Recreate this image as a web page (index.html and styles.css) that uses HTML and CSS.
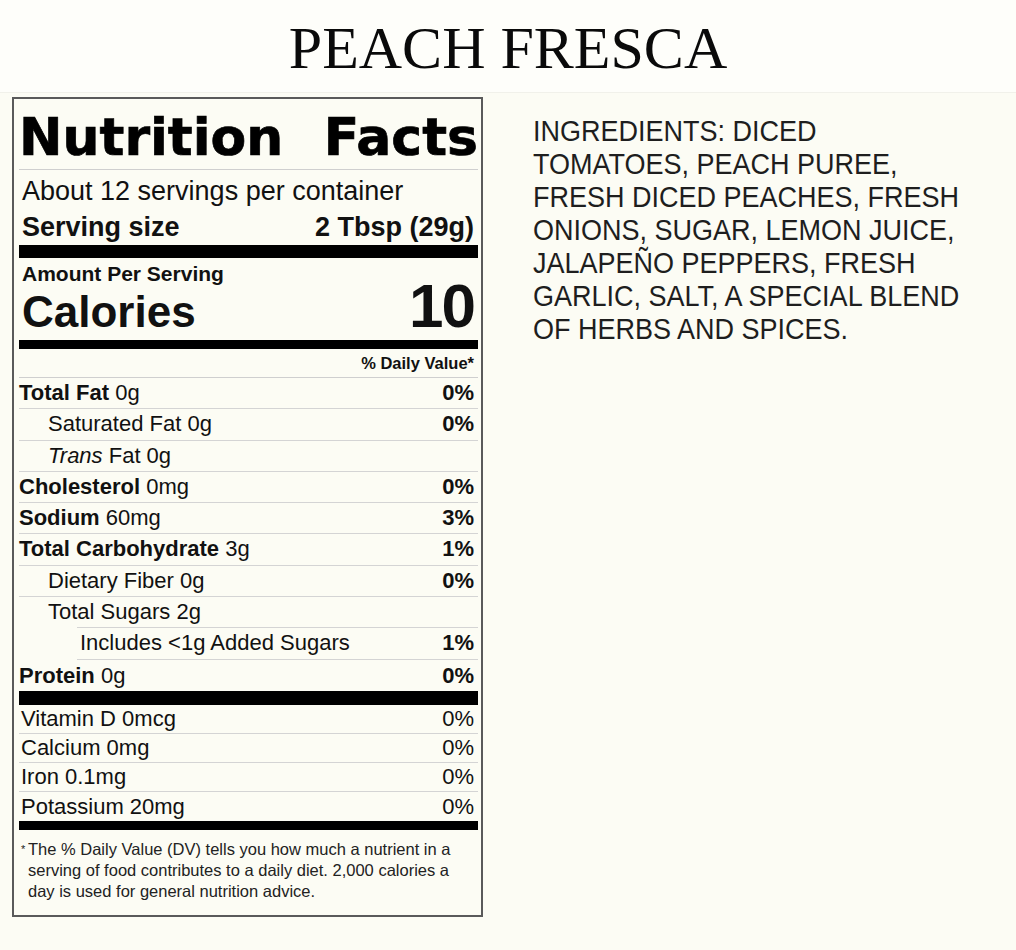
FILE: index.html
```html
<!DOCTYPE html>
<html lang="en">
<head>
<meta charset="utf-8">
<title>Peach Fresca</title>
<link rel="stylesheet" href="styles.css">
</head>
<body>
<header class="top">
  <h1 class="title">PEACH FRESCA</h1>
</header>
<main class="page">
  <section class="label">
    <div class="nf-head"><span>Nutrition</span><span>Facts</span></div>
    <div class="servings">About 12 servings per container</div>
    <div class="serving-size"><span>Serving size</span><span>2 Tbsp (29g)</span></div>
    <div class="cal-block">
      <div class="cal-left">
        <div class="amount">Amount Per Serving</div>
        <div class="cal-label">Calories</div>
      </div>
      <div class="cal-value">10</div>
    </div>
    <div class="dv-head">% Daily Value*</div>
    <div class="row"><span><b>Total Fat</b> 0g</span><b>0%</b></div>
    <div class="row sub"><span>Saturated Fat 0g</span><b>0%</b></div>
    <div class="row sub"><span><i>Trans</i> Fat 0g</span></div>
    <div class="row"><span><b>Cholesterol</b> 0mg</span><b>0%</b></div>
    <div class="row"><span><b>Sodium</b> 60mg</span><b>3%</b></div>
    <div class="row"><span><b>Total Carbohydrate</b> 3g</span><b>1%</b></div>
    <div class="row sub"><span>Dietary Fiber 0g</span><b>0%</b></div>
    <div class="row sub nob"><span>Total Sugars 2g</span></div>
    <div class="row sub2"><span>Includes &lt;1g Added Sugars</span><b>1%</b></div>
    <div class="row protein"><span><b>Protein</b> 0g</span><b>0%</b></div>
    <div class="vrow"><span>Vitamin D 0mcg</span><span>0%</span></div>
    <div class="vrow"><span>Calcium 0mg</span><span>0%</span></div>
    <div class="vrow"><span>Iron 0.1mg</span><span>0%</span></div>
    <div class="vrow vlast"><span>Potassium 20mg</span><span>0%</span></div>
    <p class="foot"><span class="ast">*</span>The % Daily Value (DV) tells you how much a nutrient in a<br>serving of food contributes to a daily diet. 2,000 calories a<br>day is used for general nutrition advice.</p>
  </section>
  <section class="ingredients">
    INGREDIENTS: DICED<br>
    TOMATOES, PEACH PUREE,<br>
    FRESH DICED PEACHES, FRESH<br>
    ONIONS, SUGAR, LEMON JUICE,<br>
    JALAPEÑO PEPPERS, FRESH<br>
    GARLIC, SALT, A SPECIAL BLEND<br>
    OF HERBS AND SPICES.
  </section>
</main>
</body>
</html>
```
FILE: styles.css
```css
html, body {
  margin: 0;
  padding: 0;
}
body {
  background: #fcfcf4;
  font-family: "Liberation Sans", Arial, sans-serif;
  color: #111;
}
.top {
  padding: 18px 0 14px;
  background: #fefefa;
  border-bottom: 1px solid #f1f1ea;
  text-align: center;
}
.title {
  margin: 0;
  font-family: "Liberation Serif", "Times New Roman", serif;
  font-weight: 400;
  font-size: 60px;
  line-height: 60px;
  color: #0a0a0a;
}
.page {
  display: flex;
  align-items: flex-start;
  gap: 50px;
  padding: 4px 0 0 12px;
}
.label {
  width: 471px;
  box-sizing: border-box;
  border: 2px solid #5a5a5a;
  padding: 12px 3px 13px 5px;
  flex: none;
}
.nf-head {
  display: flex;
  justify-content: space-between;
  font-family: "DejaVu Sans", sans-serif;
  font-weight: 700;
  font-size: 52px;
  line-height: 52px;
  color: #000;
  -webkit-text-stroke: 0.7px #000;
  padding-bottom: 6px;
  border-bottom: 1px solid #cfcfcf;
}
.servings {
  margin-top: 3px;
  padding-left: 3px;
  font-size: 27px;
  line-height: 36px;
}
.serving-size {
  display: flex;
  justify-content: space-between;
  font-weight: 700;
  font-size: 27px;
  line-height: 36px;
  padding: 0 4px 0 3px;
  border-bottom: 13px solid #000;
}
.cal-block {
  display: flex;
  justify-content: space-between;
  align-items: flex-end;
  padding: 0 4px 2px 3px;
  border-bottom: 9px solid #000;
}
.amount {
  font-weight: 700;
  font-size: 21px;
  line-height: 24px;
  padding-top: 4px;
}
.cal-label {
  font-weight: 700;
  font-size: 44px;
  line-height: 52px;
}
.cal-value {
  font-weight: 700;
  font-size: 62px;
  line-height: 60px;
  letter-spacing: -2px;
  margin-bottom: 2px;
}
.dv-head {
  text-align: right;
  font-weight: 700;
  font-size: 16.5px;
  line-height: 28px;
  padding-right: 4px;
  border-bottom: 1px solid #cfcfcf;
}
.row {
  display: flex;
  justify-content: space-between;
  font-size: 22px;
  line-height: 30.3px;
  padding-right: 4px;
  border-bottom: 1px solid #d4d4d4;
}
.row.sub {
  padding-left: 29px;
}
.row.nob {
  border-bottom: 0;
}
.row.sub2 {
  margin-left: 58px;
  padding-left: 3px;
  border-top: 1px solid #d4d4d4;
}
.row.protein {
  line-height: 31.3px;
  border-bottom: 14px solid #000;
}
.vrow {
  display: flex;
  justify-content: space-between;
  font-size: 22px;
  line-height: 28px;
  padding: 0 4px 0 2px;
  border-bottom: 1px solid #d4d4d4;
}
.vrow.vlast {
  line-height: 29px;
  border-bottom: 9px solid #000;
}
.foot {
  margin: 0;
  padding: 9px 4px 0 9px;
  text-indent: -7px;
  font-size: 16.5px;
  line-height: 21px;
  color: #222;
  white-space: nowrap;
}
.ast {
  display: inline-block;
  width: 7px;
  text-indent: 0;
  font-size: 11px;
  vertical-align: 2px;
}
.ingredients {
  padding-top: 17px;
  font-size: 30px;
  line-height: 33px;
  color: #1e1e1e;
  white-space: nowrap;
  transform: scaleX(0.9);
  transform-origin: left top;
}
```
